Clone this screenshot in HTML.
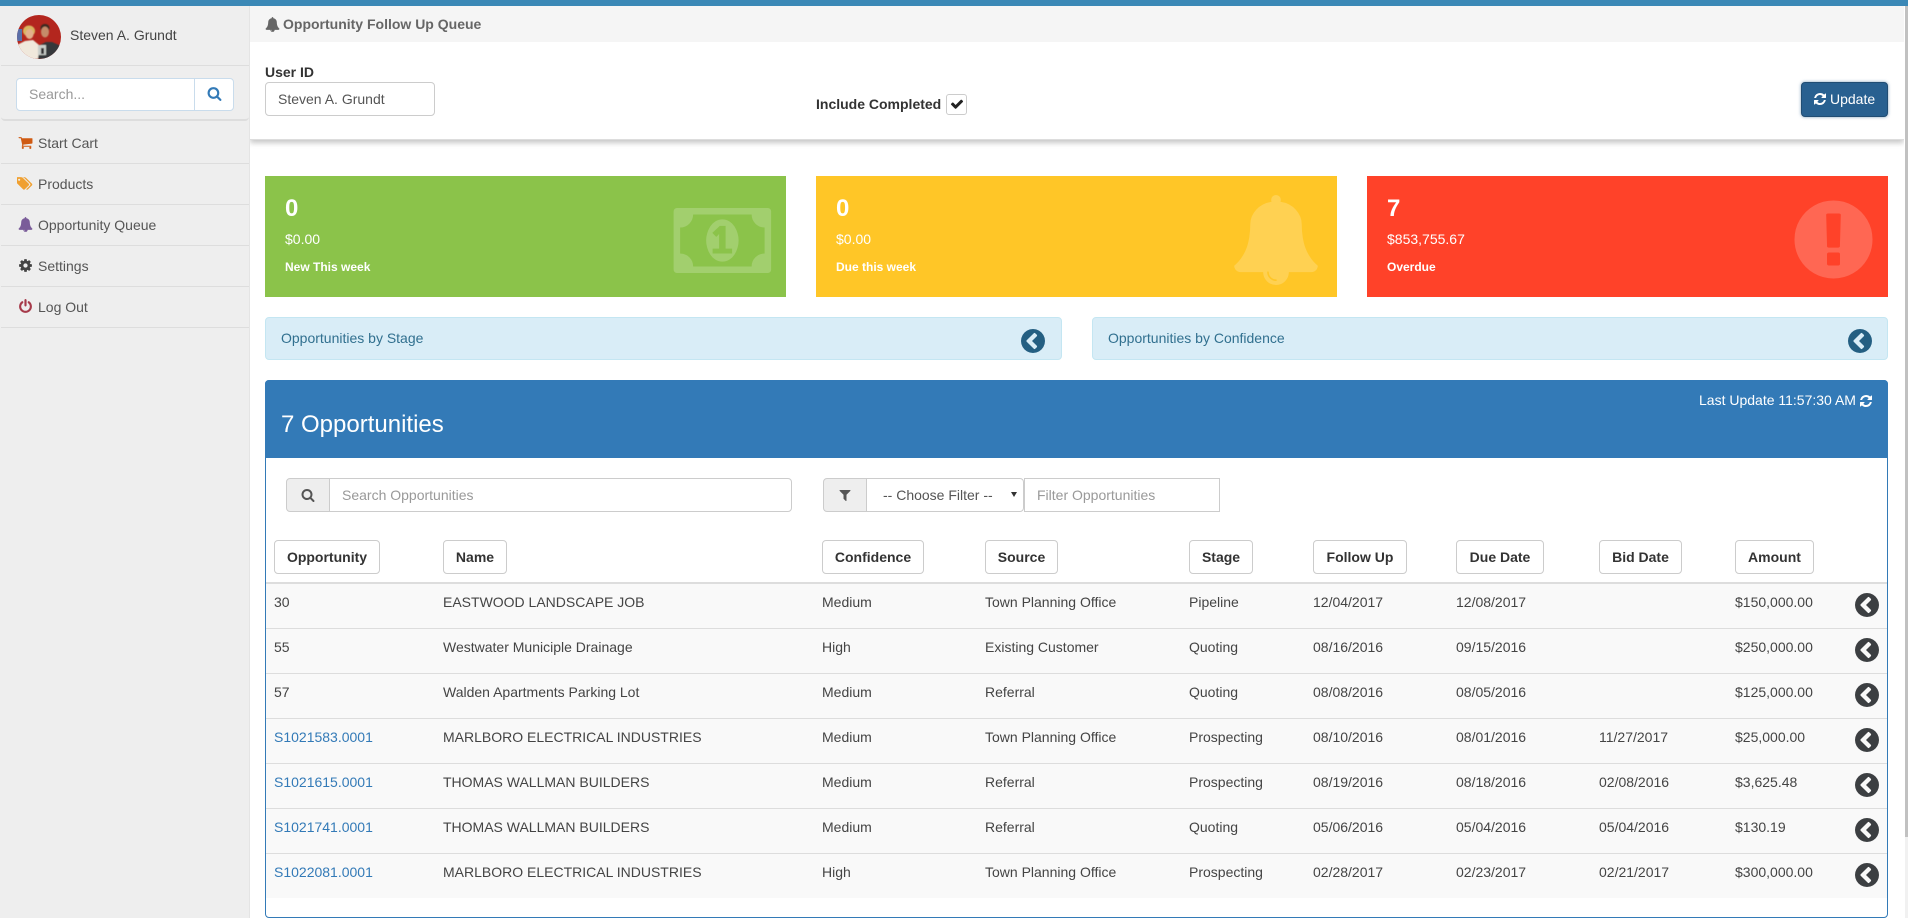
<!DOCTYPE html>
<html><head><meta charset="utf-8"><title>Opportunity Follow Up Queue</title>
<style>
html,body{margin:0;padding:0;width:1908px;height:918px;overflow:hidden;background:#fff;font-family:"Liberation Sans",Arial,sans-serif;font-size:14px;color:#333}
div,span,svg{position:absolute;box-sizing:border-box}
.t{white-space:nowrap;line-height:20px}
svg{fill:currentColor}
.side{left:0;top:6px;width:250px;height:912px;background:#eee;border-right:1px solid #e4e4e4}
.nav{left:1px;width:248px;height:41px;border-bottom:1px solid #ddd}
.nav .t{left:37px;top:10px;color:#555}
.nav svg{width:15px;height:15px;left:17px;top:12px}
.card{top:176px;height:121px;color:#fff}
.card .n{left:20px;top:18px;font-size:24px;font-weight:bold;line-height:30px}
.card .a{left:20px;top:53px}
.card .l{left:20px;top:81px;font-size:12px;font-weight:bold}
.card svg{color:rgba(255,255,255,.2)}
.acc{top:317px;height:43px;background:#d9edf7;border:1px solid #c4e6f2;border-radius:4px;color:#31708f}
.acc .t{left:15px;top:10px}
.acc svg{width:28px;height:28px;top:9px;color:#245f82}
.box{background:#fff;border:1px solid #ccc}
.hb{top:540px;height:34px;background:#fff;border:1px solid #ccc;border-radius:4px;font-weight:bold;text-align:center;line-height:32px;color:#333;white-space:nowrap}
.row{left:266px;width:1621px;height:45px;background:#f9f9f9;border-bottom:1px solid #ddd}
.row .t{top:8px;color:#444}
.row .t a{color:#337ab7;text-decoration:none}
.row svg{left:1587px;top:7px;width:28px;height:28px;color:#3c3f42}
.c1{left:8px}.c2{left:177px}.c3{left:556px}.c4{left:719px}.c5{left:923px}.c6{left:1047px}.c7{left:1190px}.c8{left:1333px}.c9{left:1469px}
</style></head><body>
<svg width="0" height="0" style="position:absolute"><defs>
<symbol id="chev" viewBox="0 0 1792 1792"><path d="M1037 1395l102-102q19-19 19-45t-19-45l-307-307 307-307q19-19 19-45t-19-45l-102-102q-19-19-45-19t-45 19l-454 454q-19 19-19 45t19 45l454 454q19 19 45 19t45-19zm627-499q0 209-103 385.500t-279.500 279.500-385.500 103-385.500-103-279.500-279.500-103-385.500 103-385.500 279.500-279.500 385.500-103 385.500 103 279.500 279.500 103 385.500z"/></symbol>
<symbol id="bell" viewBox="0 0 1792 1792"><path d="M912 1696q0-16-16-16-59 0-101.500-42.500t-42.500-101.500q0-16-16-16t-16 16q0 73 51.500 124.500t124.500 51.500q16 0 16-16zm816-288q0 52-38 90t-90 38h-448q0 106-75 181t-181 75-181-75-75-181h-448q-52 0-90-38t-38-90q50-42 91-88t85-119.500 74.500-158.500 50-206 19.500-260q0-152 117-282.500t307-158.500q-8-19-8-39 0-40 28-68t68-28 68 28 28 68q0 20-8 39 190 28 307 158.500t117 282.500q0 139 19.500 260t50 206 74.500 158.500 85 119.500 91 88z"/></symbol>
<symbol id="search" viewBox="0 0 1792 1792"><path d="M1216 832q0-185-131.500-316.500t-316.500-131.500-316.500 131.500-131.500 316.500 131.500 316.500 316.500 131.500 316.500-131.500 131.500-316.500zm512 832q0 52-38 90t-90 38q-54 0-90-38l-343-342q-179 124-399 124-143 0-273.500-55.500t-225-150-150-225-55.500-273.500 55.500-273.500 150-225 225-150 273.500-55.500 273.500 55.500 225 150 150 225 55.500 273.500q0 220-124 399l343 343q37 37 37 90z"/></symbol>
<symbol id="refresh" viewBox="0 0 1792 1792"><path d="M1639 1056q0 5-1 7-64 268-268 434.500t-478 166.500q-146 0-282.500-55t-243.500-157l-129 129q-19 19-45 19t-45-19-19-45v-448q0-26 19-45t45-19h448q26 0 45 19t19 45-19 45l-137 137q71 66 161 102t187 36q134 0 250-65t186-179q11-17 53-117 8-23 30-23h192q13 0 22.500 9.500t9.500 22.500zm25-800v448q0 26-19 45t-45 19h-448q-26 0-45-19t-19-45 19-45l138-138q-148-137-349-137-134 0-250 65t-186 179q-11 17-53 117-8 23-30 23h-199q-13 0-22.500-9.500t-9.500-22.500v-7q65-268 270-434.500t480-166.500q146 0 284 55.500t245 156.500l130-129q19-19 45-19t45 19 19 45z"/></symbol>
<symbol id="cart" viewBox="0 0 1792 1792"><path d="M704 1536q0 52-38 90t-90 38-90-38-38-90 38-90 90-38 90 38 38 90zm896 0q0 52-38 90t-90 38-90-38-38-90 38-90 90-38 90 38 38 90zm128-1088v512q0 24-16.500 42.500t-40.500 21.500l-1044 122q13 60 13 70 0 16-24 64h920q26 0 45 19t19 45-19 45-45 19h-1024q-26 0-45-19t-19-45q0-11 8-31.500t16-36 21.500-40 15.500-29.500l-177-823h-204q-26 0-45-19t-19-45 19-45 45-19h256q16 0 28.500 6.500t19.500 15.500 13 24.500 8 26 5.500 29.500 4.500 26h1201q26 0 45 19t19 45z"/></symbol>
<symbol id="tags" viewBox="0 0 1920 1792"><path d="M384 448q0-53-37.500-90.500t-90.500-37.500-90.500 37.500-37.500 90.500 37.500 90.500 90.500 37.500 90.500-37.500 37.500-90.500zm1067 576q0 53-37 90l-491 492q-39 37-91 37-53 0-90-37l-715-716q-38-37-64.500-101t-26.500-117v-416q0-52 38-90t90-38h416q53 0 117 26.500t102 64.500l715 714q37 39 37 91zm384 0q0 53-37 90l-491 492q-39 37-91 37-36 0-59-14t-53-45l470-470q37-37 37-90 0-52-37-91l-715-714q-38-38-102-64.500t-117-26.500h224q53 0 117 26.500t102 64.500l715 714q37 39 37 91z"/></symbol>
<symbol id="cog" viewBox="0 0 1792 1792"><path d="M1152 896q0-106-75-181t-181-75-181 75-75 181 75 181 181 75 181-75 75-181zm512-109v222q0 12-8 23t-20 13l-185 28q-19 54-39 91 35 50 107 138 10 12 10 25t-9 23q-27 37-99 108t-94 71q-12 0-26-9l-138-108q-44 23-91 38-16 136-29 186-7 28-36 28h-222q-14 0-24.500-8.500t-11.500-21.500l-28-184q-49-16-90-37l-141 107q-10 9-25 9-14 0-25-11-126-114-165-168-7-10-7-23 0-12 8-23 15-21 51-66.500t54-70.500q-27-50-41-99l-183-27q-13-2-21-12.500t-8-23.500v-222q0-12 8-23t19-13l186-28q14-46 39-92-40-57-107-138-10-12-10-24 0-10 9-23 26-36 98.500-107.500t94.500-71.500q13 0 26 10l138 107q44-23 91-38 16-136 29-186 7-28 36-28h222q14 0 24.500 8.500t11.500 21.500l28 184q49 16 90 37l142-107q9-9 24-9 13 0 25 10 129 119 165 170 7 8 7 22 0 12-8 23-15 21-51 66.500t-54 70.500q26 50 41 98l183 28q13 2 21 12.500t8 23.500z"/></symbol>
<symbol id="power" viewBox="0 0 1792 1792"><path d="M1664 896q0 156-61 298t-164 245-245 164-298 61-298-61-245-164-164-245-61-298q0-182 80.500-343t226.500-270q43-32 95.500-25t83.500 50q32 42 24.500 94.500t-49.500 84.500q-98 74-151.500 181t-53.500 228q0 104 40.500 198.500t109.500 163.500 163.500 109.500 198.500 40.500 198.500-40.500 163.500-109.500 109.500-163.500 40.500-198.500q0-121-53.500-228t-151.500-181q-42-32-49.500-84.500t24.500-94.500q31-43 84-50t95 25q146 109 226.500 270t80.500 343zm-640-768v640q0 52-38 90t-90 38-90-38-38-90v-640q0-52 38-90t90-38 90 38 38 90z"/></symbol>
<symbol id="filter" viewBox="0 0 1792 1792"><path d="M1595 295q17 41-14 70l-493 493v742q0 42-39 59-13 5-25 5-27 0-45-19l-256-256q-19-19-19-45v-486l-493-493q-31-29-14-70 17-39 59-39h1280q42 0 59 39z"/></symbol>
<symbol id="check" viewBox="0 0 1792 1792"><path d="M1671 566q0 40-28 68l-724 724-136 136q-28 28-68 28t-68-28l-136-136-362-362q-28-28-28-68t28-68l136-136q28-28 68-28t68 28l294 295 656-657q28-28 68-28t68 28l136 136q28 28 28 68z"/></symbol>
</defs></svg>

<div style="left:0;top:0;width:1908px;height:6px;background:#3b88b6"></div>

<!-- sidebar -->
<div class="side"></div>
<div style="left:1px;top:6px;width:248px;height:60px;border-bottom:1px solid #ddd"></div>
<div style="left:1px;top:66px;width:248px;height:55px;border-bottom:2px solid #ddd;border-radius:0 0 4px 4px"></div>
<svg style="left:17px;top:15px;width:44px;height:44px" viewBox="0 0 44 44">
<defs><clipPath id="av"><circle cx="22" cy="22" r="22"/></clipPath><filter id="bl"><feGaussianBlur stdDeviation=".6"/></filter></defs>
<g clip-path="url(#av)"><rect width="44" height="44" fill="#b3261e"/><rect y="14" width="5" height="12" fill="#5a6fa8"/>
<g filter="url(#bl)"><path d="M0 44V30l8-4 8-1 6 5 4 14z" fill="#f0e8dc"/><path d="M21 44l2-14 6-3 6 0 9 4v13z" fill="#34383a"/>
<ellipse cx="12" cy="16" rx="6" ry="5.500" fill="#d9b55e"/><ellipse cx="12.500" cy="19" rx="4" ry="5" fill="#e3b08c"/><ellipse cx="28" cy="13" rx="4.500" ry="4" fill="#3b2a20"/><ellipse cx="28" cy="17" rx="4" ry="5.500" fill="#c58c6a"/>
<rect x="21" y="30" width="8" height="10" fill="#c9cdc9"/><rect x="24" y="33" width="3" height="6" fill="#333"/></g></g></svg>
<div class="t" style="left:70px;top:25px;color:#444">Steven A. Grundt</div>
<div style="left:16px;top:78px;width:218px;height:33px;background:#fff;border:1px solid #c9dcec;border-radius:4px"></div>
<div style="left:194px;top:78px;width:1px;height:33px;background:#c9dcec"></div>
<div class="t" style="left:29px;top:84px;color:#999">Search...</div>
<svg style="left:207px;top:86px;width:15px;height:15px;color:#337ab7"><use href="#search"/></svg>

<div class="nav" style="top:123px"><svg style="color:#cf5a12"><use href="#cart"/></svg><div class="t">Start Cart</div></div>
<div class="nav" style="top:164px"><svg style="color:#f0a030;left:16px;width:16px"><use href="#tags"/></svg><div class="t">Products</div></div>
<div class="nav" style="top:205px"><svg style="color:#7a5c99"><use href="#bell"/></svg><div class="t">Opportunity Queue</div></div>
<div class="nav" style="top:246px"><svg style="color:#444"><use href="#cog"/></svg><div class="t">Settings</div></div>
<div class="nav" style="top:287px"><svg style="color:#a63a4a"><use href="#power"/></svg><div class="t">Log Out</div></div>

<!-- top section -->
<div style="left:250px;top:6px;width:1654px;height:36px;background:#f5f5f5"></div>
<div style="left:250px;top:42px;width:1654px;height:98px;background:#fff;box-shadow:0 3px 5px rgba(0,0,0,.22);border-bottom:1px solid #ddd;clip-path:inset(0 0 -12px 0)"></div>
<svg style="left:265px;top:17px;width:15px;height:15px;color:#666"><use href="#bell"/></svg>
<div class="t" style="left:283px;top:14px;font-weight:bold;color:#666">Opportunity Follow Up Queue</div>
<div class="t" style="left:265px;top:62px;font-weight:bold">User ID</div>
<div style="left:265px;top:82px;width:170px;height:34px;border:1px solid #ccc;border-radius:4px;background:#fff"></div>
<div class="t" style="left:278px;top:89px;color:#555">Steven A. Grundt</div>
<div class="t" style="left:816px;top:94px;font-weight:bold">Include Completed</div>
<div style="left:946px;top:94px;width:21px;height:21px;border:1px solid #ccc;border-radius:3px;background:#fff"></div>
<svg style="left:950px;top:97px;width:14px;height:14px;color:#222"><use href="#check"/></svg>
<div style="left:1801px;top:82px;width:87px;height:35px;background:#286090;border:1px solid #204d74;border-radius:4px;box-shadow:0 0 3px rgba(40,96,144,.6)"></div>
<svg style="left:1813px;top:92px;width:14px;height:14px;color:#fff"><use href="#refresh"/></svg>
<div class="t" style="left:1830px;top:89px;color:#fff">Update</div>

<!-- cards -->
<div class="card" style="left:265px;width:521px;background:#8bc34a"><div class="t n">0</div><div class="t a">$0.00</div><div class="t l">New This week</div>
<svg style="left:407px;top:19px;width:104px;height:91px" viewBox="0 0 2048 1792"><path d="M800 1152h384v-96h-128v-448h-114l-148 137 77 80q42-37 55-57h2v288h-128v96zm512-256q0 70-21 142t-59.500 134-101.500 101-138 39-138-39-101.500-101-59.500-134-21-142 21-142 59.500-134 101.500-101 138-39 138 39 101.500 101 59.500 134 21 142zm512 256v-512q-106 0-181-75t-75-181h-1152q0 106-75 181t-181 75v512q106 0 181 75t75 181h1152q0-106 75-181t181-75zm128-832v1152q0 26-19 45t-45 19h-1792q-26 0-45-19t-19-45v-1152q0-26 19-45t45-19h1792q26 0 45 19t19 45z" fill-rule="evenodd"/></svg></div>
<div class="card" style="left:816px;width:521px;background:#ffc627"><div class="t n">0</div><div class="t a">$0.00</div><div class="t l">Due this week</div>
<svg style="left:415px;top:19px;width:90px;height:90px"><use href="#bell"/></svg></div>
<div class="card" style="left:1367px;width:521px;background:#ff4229"><div class="t n">7</div><div class="t a">$853,755.67</div><div class="t l">Overdue</div>
<svg style="left:421px;top:18px;width:91px;height:91px" viewBox="0 0 1792 1792"><path d="M896 128q209 0 385.500 103t279.500 279.500 103 385.500-103 385.500-279.500 279.500-385.500 103-385.500-103-279.500-279.500-103-385.500 103-385.500 279.500-279.500 385.500-103zm128 1247v-190q0-14-9-23.500t-22-9.500h-192q-13 0-23 10t-10 23v190q0 13 10 23t23 10h192q13 0 22-9.500t9-23.500zm-2-344l18-621q0-12-10-18-10-8-24-8h-220q-14 0-24 8-10 6-10 18l17 621q0 10 10 17.500t24 7.500h185q14 0 23.500-7.500t10.500-17.500z" fill-rule="evenodd"/></svg></div>

<!-- accordions -->
<div class="acc" style="left:265px;width:797px"><div class="t">Opportunities by Stage</div><svg style="left:753px"><use href="#chev"/></svg></div>
<div class="acc" style="left:1092px;width:796px"><div class="t">Opportunities by Confidence</div><svg style="left:753px"><use href="#chev"/></svg></div>

<!-- panel -->
<div style="left:265px;top:380px;width:1623px;height:538px;border:1px solid #337ab7;border-radius:4px;background:#fff"></div>
<div style="left:265px;top:380px;width:1623px;height:78px;background:#337ab7;border-radius:4px 4px 0 0"></div>
<div class="t" style="left:281px;top:410px;font-size:24px;line-height:30px;color:#fff">7 Opportunities</div>
<div class="t" style="left:1699px;top:390px;color:#fff">Last Update 11:57:30 AM</div>
<svg style="left:1859px;top:394px;width:14px;height:14px;color:#fff"><use href="#refresh"/></svg>

<div style="left:286px;top:478px;width:44px;height:34px;background:#eee;border:1px solid #ccc;border-radius:4px 0 0 4px"></div>
<svg style="left:301px;top:488px;width:14px;height:14px;color:#555"><use href="#search"/></svg>
<div class="box" style="left:329px;top:478px;width:463px;height:34px;border-radius:0 4px 4px 0"></div>
<div class="t" style="left:342px;top:485px;color:#999">Search Opportunities</div>

<div style="left:823px;top:478px;width:44px;height:34px;background:#eee;border:1px solid #ccc;border-radius:4px 0 0 4px"></div>
<svg style="left:838px;top:488px;width:14px;height:14px;color:#555"><use href="#filter"/></svg>
<div class="box" style="left:866px;top:478px;width:158px;height:34px;border-radius:0 4px 4px 0"></div>
<div class="t" style="left:883px;top:485px;color:#555">-- Choose Filter --</div>
<svg style="left:1011px;top:492px;width:6px;height:5px;color:#333" viewBox="0 0 7 6" preserveAspectRatio="none"><path d="M0 0h7L3.500 6z"/></svg>
<div class="box" style="left:1024px;top:478px;width:196px;height:34px"></div>
<div class="t" style="left:1037px;top:485px;color:#999">Filter Opportunities</div>

<div class="hb" style="left:274px;width:106px">Opportunity</div>
<div class="hb" style="left:443px;width:64px">Name</div>
<div class="hb" style="left:822px;width:102px">Confidence</div>
<div class="hb" style="left:985px;width:73px">Source</div>
<div class="hb" style="left:1189px;width:64px">Stage</div>
<div class="hb" style="left:1313px;width:94px">Follow Up</div>
<div class="hb" style="left:1456px;width:88px">Due Date</div>
<div class="hb" style="left:1599px;width:83px">Bid Date</div>
<div class="hb" style="left:1735px;width:79px">Amount</div>
<div style="left:266px;top:582px;width:1621px;height:2px;background:#ddd"></div>

<div class="row" style="top:584px"><div class="t c1">30</div><div class="t c2">EASTWOOD LANDSCAPE JOB</div><div class="t c3">Medium</div><div class="t c4">Town Planning Office</div><div class="t c5">Pipeline</div><div class="t c6">12/04/2017</div><div class="t c7">12/08/2017</div><div class="t c9">$150,000.00</div><svg><use href="#chev"/></svg></div>
<div class="row" style="top:629px"><div class="t c1">55</div><div class="t c2">Westwater Municiple Drainage</div><div class="t c3">High</div><div class="t c4">Existing Customer</div><div class="t c5">Quoting</div><div class="t c6">08/16/2016</div><div class="t c7">09/15/2016</div><div class="t c9">$250,000.00</div><svg><use href="#chev"/></svg></div>
<div class="row" style="top:674px"><div class="t c1">57</div><div class="t c2">Walden Apartments Parking Lot</div><div class="t c3">Medium</div><div class="t c4">Referral</div><div class="t c5">Quoting</div><div class="t c6">08/08/2016</div><div class="t c7">08/05/2016</div><div class="t c9">$125,000.00</div><svg><use href="#chev"/></svg></div>
<div class="row" style="top:719px"><div class="t c1"><a>S1021583.0001</a></div><div class="t c2">MARLBORO ELECTRICAL INDUSTRIES</div><div class="t c3">Medium</div><div class="t c4">Town Planning Office</div><div class="t c5">Prospecting</div><div class="t c6">08/10/2016</div><div class="t c7">08/01/2016</div><div class="t c8">11/27/2017</div><div class="t c9">$25,000.00</div><svg><use href="#chev"/></svg></div>
<div class="row" style="top:764px"><div class="t c1"><a>S1021615.0001</a></div><div class="t c2">THOMAS WALLMAN BUILDERS</div><div class="t c3">Medium</div><div class="t c4">Referral</div><div class="t c5">Prospecting</div><div class="t c6">08/19/2016</div><div class="t c7">08/18/2016</div><div class="t c8">02/08/2016</div><div class="t c9">$3,625.48</div><svg><use href="#chev"/></svg></div>
<div class="row" style="top:809px"><div class="t c1"><a>S1021741.0001</a></div><div class="t c2">THOMAS WALLMAN BUILDERS</div><div class="t c3">Medium</div><div class="t c4">Referral</div><div class="t c5">Quoting</div><div class="t c6">05/06/2016</div><div class="t c7">05/04/2016</div><div class="t c8">05/04/2016</div><div class="t c9">$130.19</div><svg><use href="#chev"/></svg></div>
<div class="row" style="top:854px;height:44px;border-bottom:0"><div class="t c1"><a>S1022081.0001</a></div><div class="t c2">MARLBORO ELECTRICAL INDUSTRIES</div><div class="t c3">High</div><div class="t c4">Town Planning Office</div><div class="t c5">Prospecting</div><div class="t c6">02/28/2017</div><div class="t c7">02/23/2017</div><div class="t c8">02/21/2017</div><div class="t c9">$300,000.00</div><svg><use href="#chev"/></svg></div>

<!-- scrollbar -->
<div style="left:1905px;top:6px;width:3px;height:912px;background:#f1f1f1"></div>
<div style="left:1905px;top:6px;width:3px;height:831px;background:#c1c1c1"></div>
</body></html>
